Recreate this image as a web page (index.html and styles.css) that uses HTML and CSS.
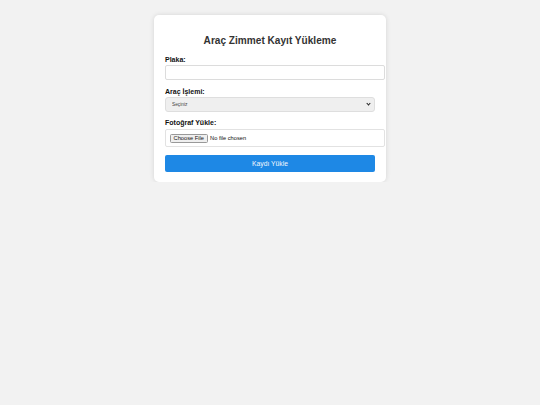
FILE: index.html
```html
<!DOCTYPE html>
<html lang="tr">
<head>
<meta charset="utf-8">
<title>Araç Zimmet Kayıt Yükleme</title>
<link rel="stylesheet" href="styles.css">
</head>
<body>
<div class="card">
  <h2 class="title">Araç Zimmet Kayıt Yükleme</h2>
  <form class="form">
    <label class="label label-plaka" for="plaka">Plaka:</label>
    <input class="text-input" id="plaka" type="text">
    <label class="label label-islem" for="islem">Araç İşlemi:</label>
    <div class="select-wrap">
      <select class="select" id="islem">
        <option>Seçiniz</option>
      </select>
    </div>
    <label class="label label-foto" for="foto">Fotoğraf Yükle:</label>
    <div class="file-box">
      <span class="file-btn">Choose File</span>
      <span class="file-text">No file chosen</span>
    </div>
    <button class="submit" type="button">Kaydı Yükle</button>
  </form>
</div>
</body>
</html>
```
FILE: styles.css
```css
html, body {
  margin: 0;
  padding: 0;
}
body {
  background: #f2f2f2;
  font-family: "Liberation Sans", Arial, sans-serif;
  color: #222;
}
.card {
  width: 210px;
  margin: 15px auto 0;
  padding: 11px 11px 10px;
  background: #fff;
  border-radius: 5px;
  box-shadow: 0 0 5px rgba(0, 0, 0, 0.12);
}
.title {
  margin: 8.6px 0 9.5px;
  text-align: center;
  font-size: 10.1px;
  line-height: 12px;
  font-weight: bold;
  color: #333;
}
.form {
  display: flex;
  flex-direction: column;
  align-items: flex-start;
}
.label {
  font-size: 7px;
  line-height: 7px;
  font-weight: bold;
  color: #111;
}
.label-plaka {
  margin-bottom: 2px;
}
.label-islem {
  margin-bottom: 1.5px;
}
.label-foto {
  margin-bottom: 3px;
}
.text-input {
  box-sizing: border-box;
  width: 220px;
  height: 15px;
  padding: 0 5px;
  border: 1px solid #dcdcdc;
  border-radius: 2px;
  margin: 0 0 8px;
  background: #fff;
}
.select-wrap {
  position: relative;
  width: 210px;
  margin: 0 0 7.5px;
}
.select-wrap::after {
  content: "";
  position: absolute;
  right: 5px;
  top: 5.5px;
  width: 2px;
  height: 2px;
  border-right: 1.2px solid #222;
  border-bottom: 1.2px solid #222;
  transform: rotate(45deg);
  pointer-events: none;
}
.select {
  appearance: none;
  -webkit-appearance: none;
  display: block;
  width: 210px;
  height: 15px;
  box-sizing: border-box;
  padding: 0 0 0 6px;
  border: 1px solid #dedede;
  border-radius: 3px;
  background: #efefef;
  font-family: "Liberation Sans", Arial, sans-serif;
  font-size: 4.8px;
  color: #444;
  margin: 0;
}
.file-box {
  width: 220px;
  height: 18px;
  box-sizing: border-box;
  border: 1px solid #e2e2e2;
  border-radius: 2px;
  display: flex;
  align-items: center;
  padding: 0 0 0 4px;
  gap: 2.5px;
  margin: 0 0 8px;
}
.file-btn {
  font-size: 5.7px;
  line-height: 7px;
  padding: 0 2.6px;
  border: 1px solid #999;
  border-radius: 1.5px;
  background: #efefef;
  color: #111;
}
.file-text {
  font-size: 5.7px;
  color: #111;
}
.submit {
  width: 210px;
  height: 17px;
  border: none;
  border-radius: 2px;
  background: #1e88e5;
  color: #f4f8fd;
  font-family: "Liberation Sans", Arial, sans-serif;
  font-size: 6.75px;
  padding: 0;
}
```
